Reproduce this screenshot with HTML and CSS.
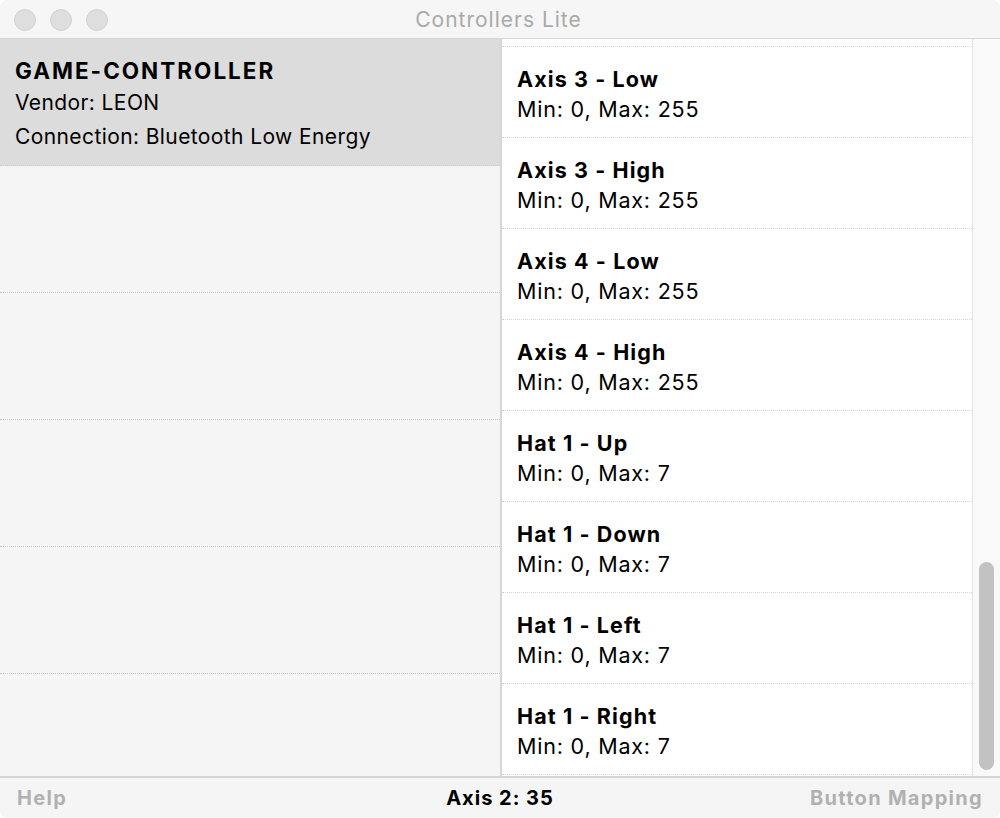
FILE: index.html
```html
<!DOCTYPE html>
<html>
<head>
<meta charset="utf-8">
<link rel="stylesheet" href="styles.css">
</head>
<body>
<div class="window">
  <header class="titlebar">
    <div class="lights">
      <span class="light"></span><span class="light"></span><span class="light"></span>
    </div>
    <div class="title">Controllers Lite</div>
  </header>
  <main class="content">
    <section class="devices">
      <div class="device selected">
        <div class="device-name">GAME-CONTROLLER</div>
        <div class="device-line">Vendor: LEON</div>
        <div class="device-line">Connection: Bluetooth Low Energy</div>
      </div>
      <div class="device"></div>
      <div class="device"></div>
      <div class="device"></div>
      <div class="device"></div>
      <div class="device"></div>
    </section>
    <section class="elements">
      <div class="list">
        <div class="row row-cut"></div>
        <div class="row"><div class="row-title">Axis 3 - Low</div><div class="row-sub">Min: 0, Max: 255</div></div>
        <div class="row"><div class="row-title">Axis 3 - High</div><div class="row-sub">Min: 0, Max: 255</div></div>
        <div class="row"><div class="row-title">Axis 4 - Low</div><div class="row-sub">Min: 0, Max: 255</div></div>
        <div class="row"><div class="row-title">Axis 4 - High</div><div class="row-sub">Min: 0, Max: 255</div></div>
        <div class="row"><div class="row-title">Hat 1 - Up</div><div class="row-sub">Min: 0, Max: 7</div></div>
        <div class="row"><div class="row-title">Hat 1 - Down</div><div class="row-sub">Min: 0, Max: 7</div></div>
        <div class="row"><div class="row-title">Hat 1 - Left</div><div class="row-sub">Min: 0, Max: 7</div></div>
        <div class="row"><div class="row-title">Hat 1 - Right</div><div class="row-sub">Min: 0, Max: 7</div></div>
      </div>
    </section>
    <aside class="scrollbar">
      <div class="thumb"></div>
    </aside>
  </main>
  <footer class="statusbar">
    <span class="status-btn">Help</span>
    <span class="status-value">Axis 2: 35</span>
    <span class="status-btn right">Button Mapping</span>
  </footer>
</div>
</body>
</html>
```

FILE: styles.css
```css
* { box-sizing: border-box; }
html, body {
  margin: 0;
  padding: 0;
  background: #ffffff;
}
body {
  font-family: Inter, "Liberation Sans", Arial, sans-serif;
  color: #000;
}
.window {
  width: 1000px;
  height: 818px;
  display: flex;
  flex-direction: column;
  background: #f5f5f5;
  border-radius: 8px;
  overflow: hidden;
}
.titlebar {
  height: 39px;
  flex: 0 0 39px;
  background: #f6f6f6;
  border-bottom: 1px solid #d6d6d6;
  position: relative;
  display: flex;
  align-items: center;
  justify-content: center;
}
.lights {
  position: absolute;
  left: 14px;
  top: 9px;
  display: flex;
  gap: 14px;
}
.light {
  width: 22px;
  height: 22px;
  border-radius: 50%;
  background: #dedede;
  border: 1px solid #d2d2d2;
}
.title {
  font-size: 21px;
  line-height: 26px;
  color: #a9a9a9;
  letter-spacing: 1px;
  margin-left: -3px;
  margin-top: 1px;
}
.content {
  flex: 1;
  display: flex;
  min-height: 0;
}
.devices {
  width: 502px;
  flex: 0 0 502px;
  background: #f5f5f5;
  border-right: 2px solid #d6d6d6;
  overflow: hidden;
}
.device {
  height: 127px;
  border-bottom: 1px dotted #c8c8c8;
  padding: 17px 15px 0;
}
.device.selected {
  background: #dcdcdc;
}
.device-name {
  font-size: 22.5px;
  font-weight: 700;
  line-height: 30px;
  letter-spacing: 2px;
}
.device-line {
  font-size: 21px;
  line-height: 33.5px;
  letter-spacing: 0.4px;
}
.elements {
  flex: 1;
  background: #ffffff;
  overflow: hidden;
}
.row {
  height: 91px;
  border-bottom: 1px dotted #d4d4d4;
  padding: 17px 15px 0;
}
.row.row-cut {
  height: 8px;
  padding: 0;
}
.row-title {
  font-size: 21.5px;
  font-weight: 700;
  line-height: 30px;
  letter-spacing: 1.1px;
}
.row-sub {
  font-size: 21.5px;
  line-height: 31px;
  letter-spacing: 0.8px;
}
.scrollbar {
  width: 28px;
  flex: 0 0 28px;
  background: #f9f9f9;
  border-left: 1px solid #e4e4e4;
  position: relative;
}
.thumb {
  position: absolute;
  left: 6px;
  top: 523px;
  width: 15px;
  height: 208px;
  border-radius: 8px;
  background: #c2c2c2;
}
.statusbar {
  height: 42px;
  flex: 0 0 42px;
  border-top: 2px solid #d4d4d4;
  background: #f5f5f5;
  display: grid;
  grid-template-columns: 1fr auto 1fr;
  align-items: center;
  padding: 0 17px 0;
}
.status-btn {
  font-size: 20px;
  font-weight: 700;
  color: #b1b1b1;
  letter-spacing: 1.3px;
}
.status-btn.right {
  justify-self: end;
}
.status-value {
  font-size: 20px;
  font-weight: 700;
  color: #000;
  letter-spacing: 1px;
}
```
